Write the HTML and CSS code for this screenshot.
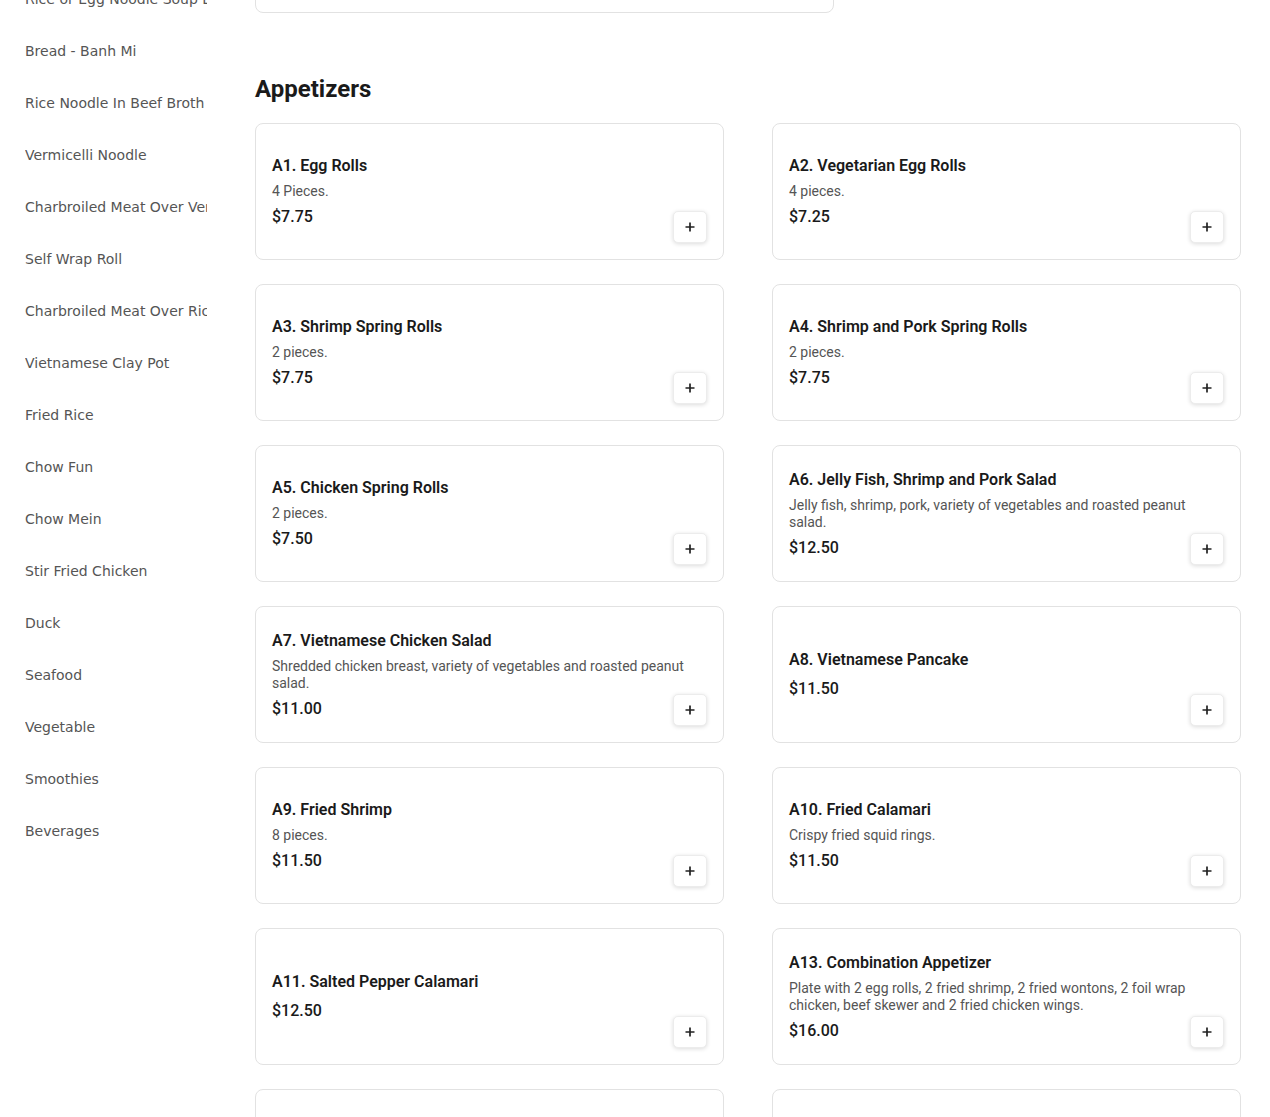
FILE: index.html
```html
<!DOCTYPE html>
<html>
<head>
<meta charset="utf-8">
<link rel="stylesheet" href="styles.css">
</head>
<body>
<div class="page">
  <nav class="sidebar">
    <div class="nav-item">Rice or Egg Noodle Soup Bowl</div>
    <div class="nav-item">Bread - Banh Mi</div>
    <div class="nav-item">Rice Noodle In Beef Broth</div>
    <div class="nav-item">Vermicelli Noodle</div>
    <div class="nav-item">Charbroiled Meat Over Vermicelli</div>
    <div class="nav-item">Self Wrap Roll</div>
    <div class="nav-item">Charbroiled Meat Over Rice</div>
    <div class="nav-item">Vietnamese Clay Pot</div>
    <div class="nav-item">Fried Rice</div>
    <div class="nav-item">Chow Fun</div>
    <div class="nav-item">Chow Mein</div>
    <div class="nav-item">Stir Fried Chicken</div>
    <div class="nav-item">Duck</div>
    <div class="nav-item">Seafood</div>
    <div class="nav-item">Vegetable</div>
    <div class="nav-item">Smoothies</div>
    <div class="nav-item">Beverages</div>
  </nav>
  <main class="main">
    <div class="prev-card"></div>
    <h2 class="section-title">Appetizers</h2>
    <div class="grid">
      <div class="card"><div class="info"><div class="name">A1. Egg Rolls</div><div class="desc">4 Pieces.</div><div class="price">$7.75</div></div><button class="add"><svg viewBox="0 0 12 12" width="12" height="12"><path d="M6 1.5v9M1.5 6h9" stroke="#222" stroke-width="1.7" fill="none"/></svg></button></div>
      <div class="card"><div class="info"><div class="name">A2. Vegetarian Egg Rolls</div><div class="desc">4 pieces.</div><div class="price">$7.25</div></div><button class="add"><svg viewBox="0 0 12 12" width="12" height="12"><path d="M6 1.5v9M1.5 6h9" stroke="#222" stroke-width="1.7" fill="none"/></svg></button></div>
      <div class="card"><div class="info"><div class="name">A3. Shrimp Spring Rolls</div><div class="desc">2 pieces.</div><div class="price">$7.75</div></div><button class="add"><svg viewBox="0 0 12 12" width="12" height="12"><path d="M6 1.5v9M1.5 6h9" stroke="#222" stroke-width="1.7" fill="none"/></svg></button></div>
      <div class="card"><div class="info"><div class="name">A4. Shrimp and Pork Spring Rolls</div><div class="desc">2 pieces.</div><div class="price">$7.75</div></div><button class="add"><svg viewBox="0 0 12 12" width="12" height="12"><path d="M6 1.5v9M1.5 6h9" stroke="#222" stroke-width="1.7" fill="none"/></svg></button></div>
      <div class="card"><div class="info"><div class="name">A5. Chicken Spring Rolls</div><div class="desc">2 pieces.</div><div class="price">$7.50</div></div><button class="add"><svg viewBox="0 0 12 12" width="12" height="12"><path d="M6 1.5v9M1.5 6h9" stroke="#222" stroke-width="1.7" fill="none"/></svg></button></div>
      <div class="card"><div class="info"><div class="name">A6. Jelly Fish, Shrimp and Pork Salad</div><div class="desc">Jelly fish, shrimp, pork, variety of vegetables and roasted peanut salad.</div><div class="price">$12.50</div></div><button class="add"><svg viewBox="0 0 12 12" width="12" height="12"><path d="M6 1.5v9M1.5 6h9" stroke="#222" stroke-width="1.7" fill="none"/></svg></button></div>
      <div class="card"><div class="info"><div class="name">A7. Vietnamese Chicken Salad</div><div class="desc">Shredded chicken breast, variety of vegetables and roasted peanut salad.</div><div class="price">$11.00</div></div><button class="add"><svg viewBox="0 0 12 12" width="12" height="12"><path d="M6 1.5v9M1.5 6h9" stroke="#222" stroke-width="1.7" fill="none"/></svg></button></div>
      <div class="card"><div class="info"><div class="name">A8. Vietnamese Pancake</div><div class="desc"></div><div class="price">$11.50</div></div><button class="add"><svg viewBox="0 0 12 12" width="12" height="12"><path d="M6 1.5v9M1.5 6h9" stroke="#222" stroke-width="1.7" fill="none"/></svg></button></div>
      <div class="card"><div class="info"><div class="name">A9. Fried Shrimp</div><div class="desc">8 pieces.</div><div class="price">$11.50</div></div><button class="add"><svg viewBox="0 0 12 12" width="12" height="12"><path d="M6 1.5v9M1.5 6h9" stroke="#222" stroke-width="1.7" fill="none"/></svg></button></div>
      <div class="card"><div class="info"><div class="name">A10. Fried Calamari</div><div class="desc">Crispy fried squid rings.</div><div class="price">$11.50</div></div><button class="add"><svg viewBox="0 0 12 12" width="12" height="12"><path d="M6 1.5v9M1.5 6h9" stroke="#222" stroke-width="1.7" fill="none"/></svg></button></div>
      <div class="card"><div class="info"><div class="name">A11. Salted Pepper Calamari</div><div class="desc"></div><div class="price">$12.50</div></div><button class="add"><svg viewBox="0 0 12 12" width="12" height="12"><path d="M6 1.5v9M1.5 6h9" stroke="#222" stroke-width="1.7" fill="none"/></svg></button></div>
      <div class="card"><div class="info"><div class="name">A13. Combination Appetizer</div><div class="desc">Plate with 2 egg rolls, 2 fried shrimp, 2 fried wontons, 2 foil wrap chicken, beef skewer and 2 fried chicken wings.</div><div class="price">$16.00</div></div><button class="add"><svg viewBox="0 0 12 12" width="12" height="12"><path d="M6 1.5v9M1.5 6h9" stroke="#222" stroke-width="1.7" fill="none"/></svg></button></div>
      <div class="card"><div class="info"><div class="name">A14. Fried Wontons</div><div class="desc">8 pieces.</div><div class="price">$8.50</div></div><button class="add"><svg viewBox="0 0 12 12" width="12" height="12"><path d="M6 1.5v9M1.5 6h9" stroke="#222" stroke-width="1.7" fill="none"/></svg></button></div>
      <div class="card"><div class="info"><div class="name">A15. Chicken Wings</div><div class="desc">6 pieces.</div><div class="price">$10.50</div></div><button class="add"><svg viewBox="0 0 12 12" width="12" height="12"><path d="M6 1.5v9M1.5 6h9" stroke="#222" stroke-width="1.7" fill="none"/></svg></button></div>
    </div>
  </main>
</div>
</body>
</html>
```
FILE: styles.css
```css
html {
  overflow: hidden;
  background: #fff;
}
body {
  margin: 0;
  background: #fff;
  font-family: Roboto, "Liberation Sans", sans-serif;
  color: #1a1a1a;
}
.page {
  display: flex;
  align-items: flex-start;
  margin-top: -47px;
}
.sidebar {
  width: 182px;
  flex: none;
  padding: 20px 0 0 25px;
}
.nav-item {
  height: 52px;
  line-height: 52px;
  font-family: "DejaVu Sans", sans-serif;
  font-size: 14px;
  color: #555;
  white-space: nowrap;
  overflow: hidden;
}
.main {
  width: 986px;
  margin-left: 48px;
  flex: none;
}
.prev-card {
  width: 579px;
  height: 60px;
  box-sizing: border-box;
  border: 1px solid #e2e2e2;
  border-radius: 8px;
}
.section-title {
  margin: 60px 0 18px;
  font-size: 24px;
  line-height: 32px;
  font-weight: 700;
  color: #1a1a1a;
}
.grid {
  display: grid;
  grid-template-columns: 1fr 1fr;
  column-gap: 48px;
  row-gap: 24px;
}
.card {
  box-sizing: border-box;
  height: 137px;
  border: 1px solid #e2e2e2;
  border-radius: 8px;
  padding: 16px;
  display: grid;
  grid-template-columns: 1fr;
  grid-template-rows: 1fr;
}
.info {
  grid-area: 1 / 1;
  align-self: center;
  min-width: 0;
}
.name {
  font-size: 16px;
  line-height: 24px;
  font-weight: 600;
  color: #1a1a1a;
}
.desc {
  margin-top: 5px;
  font-size: 14px;
  line-height: 17px;
  color: #555;
}
.price {
  margin-top: 5px;
  font-size: 16px;
  line-height: 24px;
  font-weight: 500;
  color: #1a1a1a;
}
.add {
  grid-area: 1 / 1;
  align-self: end;
  justify-self: end;
  width: 34px;
  height: 32px;
  padding: 0;
  background: #fff;
  border: 1px solid #ececec;
  border-radius: 5px;
  box-shadow: 0 1px 4px rgba(0, 0, 0, 0.14);
  display: flex;
  align-items: center;
  justify-content: center;
}
.add svg {
  display: block;
}
```
